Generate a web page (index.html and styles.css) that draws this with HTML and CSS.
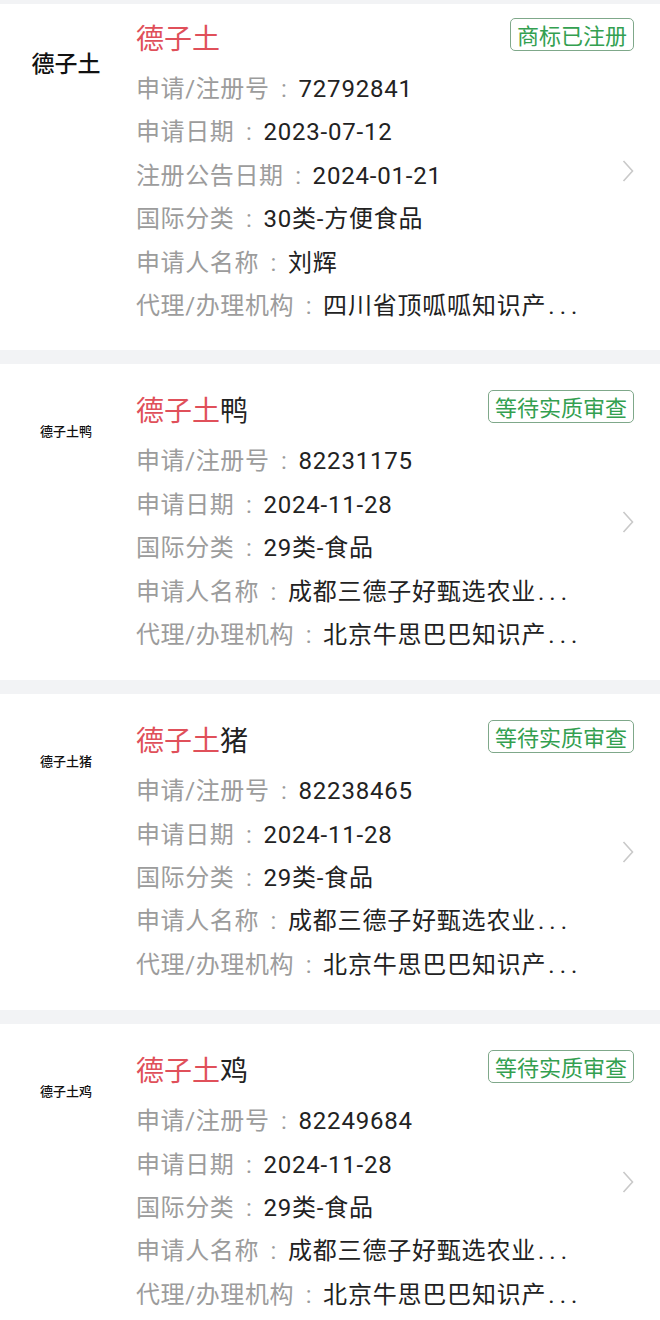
FILE: index.html
```html
<!DOCTYPE html>
<html lang="zh-CN">
<head>
<meta charset="utf-8">
<title>商标列表</title>
<link rel="stylesheet" href="styles.css">
</head>
<body>
<div class="list">

  <div class="card card-first">
    <div class="logo logo-big">德子土</div>
    <div class="head">
      <div class="title"><span class="hl">德子土</span></div>
      <div class="badge">商标已注册</div>
    </div>
    <div class="body">
      <div class="row"><span class="lb">申请/注册号</span><span class="colon">:</span><span class="val">72792841</span></div>
      <div class="row"><span class="lb">申请日期</span><span class="colon">:</span><span class="val">2023-07-12</span></div>
      <div class="row"><span class="lb">注册公告日期</span><span class="colon">:</span><span class="val">2024-01-21</span></div>
      <div class="row"><span class="lb">国际分类</span><span class="colon">:</span><span class="val">30类-方便食品</span></div>
      <div class="row"><span class="lb">申请人名称</span><span class="colon">:</span><span class="val">刘辉</span></div>
      <div class="row"><span class="lb">代理/办理机构</span><span class="colon">:</span><span class="val">四川省顶呱呱知识产<span class="dots">...</span></span></div>
    </div>
    <svg class="chev" viewBox="0 0 12 24" width="12" height="24"><polyline points="1.5,2 10.5,12 1.5,22" fill="none" stroke="#c9c9c9" stroke-width="1.6"/></svg>
  </div>

  <div class="card">
    <div class="logo">德子土鸭</div>
    <div class="head">
      <div class="title"><span class="hl">德子土</span>鸭</div>
      <div class="badge">等待实质审查</div>
    </div>
    <div class="body">
      <div class="row"><span class="lb">申请/注册号</span><span class="colon">:</span><span class="val">82231175</span></div>
      <div class="row"><span class="lb">申请日期</span><span class="colon">:</span><span class="val">2024-11-28</span></div>
      <div class="row"><span class="lb">国际分类</span><span class="colon">:</span><span class="val">29类-食品</span></div>
      <div class="row"><span class="lb">申请人名称</span><span class="colon">:</span><span class="val">成都三德子好甄选农业<span class="dots">...</span></span></div>
      <div class="row"><span class="lb">代理/办理机构</span><span class="colon">:</span><span class="val">北京牛思巴巴知识产<span class="dots">...</span></span></div>
    </div>
    <svg class="chev" viewBox="0 0 12 24" width="12" height="24"><polyline points="1.5,2 10.5,12 1.5,22" fill="none" stroke="#c9c9c9" stroke-width="1.6"/></svg>
  </div>

  <div class="card">
    <div class="logo">德子土猪</div>
    <div class="head">
      <div class="title"><span class="hl">德子土</span>猪</div>
      <div class="badge">等待实质审查</div>
    </div>
    <div class="body">
      <div class="row"><span class="lb">申请/注册号</span><span class="colon">:</span><span class="val">82238465</span></div>
      <div class="row"><span class="lb">申请日期</span><span class="colon">:</span><span class="val">2024-11-28</span></div>
      <div class="row"><span class="lb">国际分类</span><span class="colon">:</span><span class="val">29类-食品</span></div>
      <div class="row"><span class="lb">申请人名称</span><span class="colon">:</span><span class="val">成都三德子好甄选农业<span class="dots">...</span></span></div>
      <div class="row"><span class="lb">代理/办理机构</span><span class="colon">:</span><span class="val">北京牛思巴巴知识产<span class="dots">...</span></span></div>
    </div>
    <svg class="chev" viewBox="0 0 12 24" width="12" height="24"><polyline points="1.5,2 10.5,12 1.5,22" fill="none" stroke="#c9c9c9" stroke-width="1.6"/></svg>
  </div>

  <div class="card">
    <div class="logo">德子土鸡</div>
    <div class="head">
      <div class="title"><span class="hl">德子土</span>鸡</div>
      <div class="badge">等待实质审查</div>
    </div>
    <div class="body">
      <div class="row"><span class="lb">申请/注册号</span><span class="colon">:</span><span class="val">82249684</span></div>
      <div class="row"><span class="lb">申请日期</span><span class="colon">:</span><span class="val">2024-11-28</span></div>
      <div class="row"><span class="lb">国际分类</span><span class="colon">:</span><span class="val">29类-食品</span></div>
      <div class="row"><span class="lb">申请人名称</span><span class="colon">:</span><span class="val">成都三德子好甄选农业<span class="dots">...</span></span></div>
      <div class="row"><span class="lb">代理/办理机构</span><span class="colon">:</span><span class="val">北京牛思巴巴知识产<span class="dots">...</span></span></div>
    </div>
    <svg class="chev" viewBox="0 0 12 24" width="12" height="24"><polyline points="1.5,2 10.5,12 1.5,22" fill="none" stroke="#c9c9c9" stroke-width="1.6"/></svg>
  </div>

</div>
</body>
</html>
```
FILE: styles.css
```css
* { box-sizing: border-box; }

html, body {
  margin: 0;
  padding: 0;
  background: #f2f3f5;
}

body {
  font-family: Roboto, "Noto Sans CJK SC", sans-serif;
  color: #222;
}

.list {
  display: flex;
  flex-direction: column;
  gap: 14px;
  padding-top: 4px;
}

.card {
  background: #fff;
  display: grid;
  grid-template-columns: 136px 1fr 12px;
  grid-template-rows: auto auto;
  padding: 22px 26px 23px 0;
}

.card-first {
  padding-top: 10px;
  padding-bottom: 22px;
}

.logo {
  grid-column: 1;
  grid-row: 1 / 3;
  align-self: start;
  width: 100px;
  height: 88px;
  margin-left: 16px;
  display: flex;
  align-items: center;
  justify-content: center;
  font-family: "Noto Sans CJK SC", sans-serif;
  font-size: 13px;
  font-weight: 500;
  color: #111;
  white-space: nowrap;
}

.logo-big {
  font-size: 23px;
  padding-top: 8px;
}

.head {
  grid-column: 2 / 4;
  grid-row: 1;
  display: flex;
  justify-content: space-between;
  align-items: flex-start;
}

.title {
  font-family: "Noto Sans CJK SC", sans-serif;
  font-size: 28px;
  line-height: 46px;
  color: #222;
}

.hl {
  color: #e0505a;
}

.badge {
  margin-top: 4px;
  height: 33px;
  padding: 0 6px;
  border: 1px solid #7fa88a;
  border-radius: 5px;
  color: #33a050;
  font-family: "Noto Sans CJK SC", sans-serif;
  font-size: 22px;
  line-height: 31px;
  white-space: nowrap;
}

.body {
  grid-column: 2;
  grid-row: 2;
  margin-top: 8px;
}

.row {
  font-size: 24px;
  line-height: 43.4px;
  height: 43.4px;
  white-space: nowrap;
}

.lb {
  color: #9c9c9c;
  letter-spacing: 0.6px;
}

.colon {
  display: inline-block;
  width: 29px;
  text-align: center;
  color: #9c9c9c;
}

.val {
  color: #222;
  letter-spacing: 0.8px;
}

.dots {
  letter-spacing: 5px;
  margin-left: 2px;
}

.chev {
  grid-column: 3;
  grid-row: 1 / 3;
  align-self: center;
  display: block;
}
```
